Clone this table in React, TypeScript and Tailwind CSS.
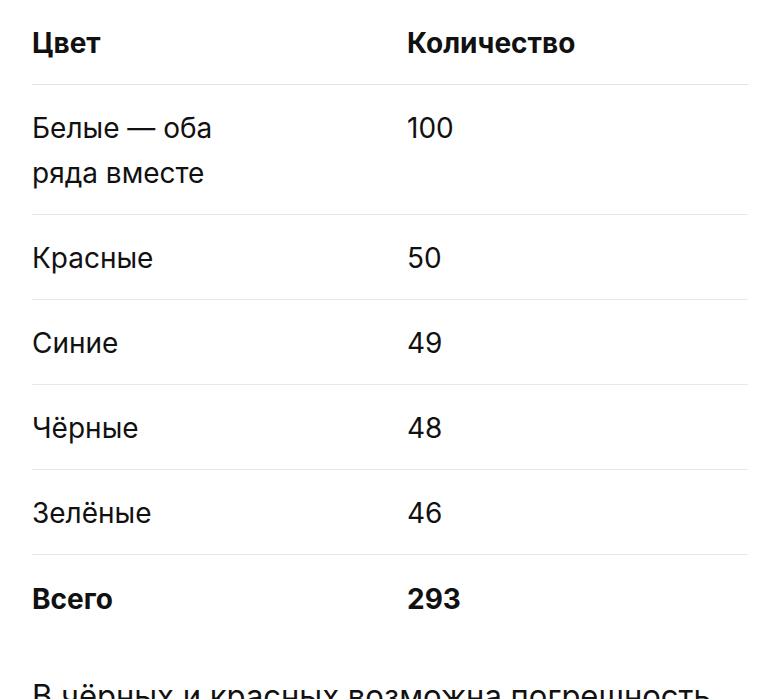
import React from "react";

const rows: { c: React.ReactNode; n: string }[] = [
  { c: <>Белые — оба<br />ряда вместе</>, n: "100" },
  { c: "Красные", n: "50" },
  { c: "Синие", n: "49" },
  { c: "Чёрные", n: "48" },
  { c: "Зелёные", n: "46" },
];

export default function App() {
  return (
    <div
      className="h-[699px] overflow-hidden bg-white px-8 text-[28px] leading-[45px] text-[#111111]"
      style={{ fontFamily: "Inter, 'Noto Sans', sans-serif" }}
    >
      <div className="grid grid-cols-[375px_1fr] border-b border-[#e4e4e4] pt-[20.5px] pb-[18px] font-bold">
        <div>Цвет</div>
        <div>Количество</div>
      </div>
      {rows.map((r, i) => (
        <div key={i} className="grid grid-cols-[375px_1fr] border-b border-[#e8e8e8] pt-[21.5px] pb-[17.5px]">
          <div>{r.c}</div>
          <div>{r.n}</div>
        </div>
      ))}
      <div className="grid grid-cols-[375px_1fr] pt-[22px] pb-[17px] font-bold">
        <div>Всего</div>
        <div>293</div>
      </div>
      <p className="mt-[33px] whitespace-nowrap text-[31px] leading-[48px]">В чёрных и красных возможна погрешность</p>
    </div>
  );
}
